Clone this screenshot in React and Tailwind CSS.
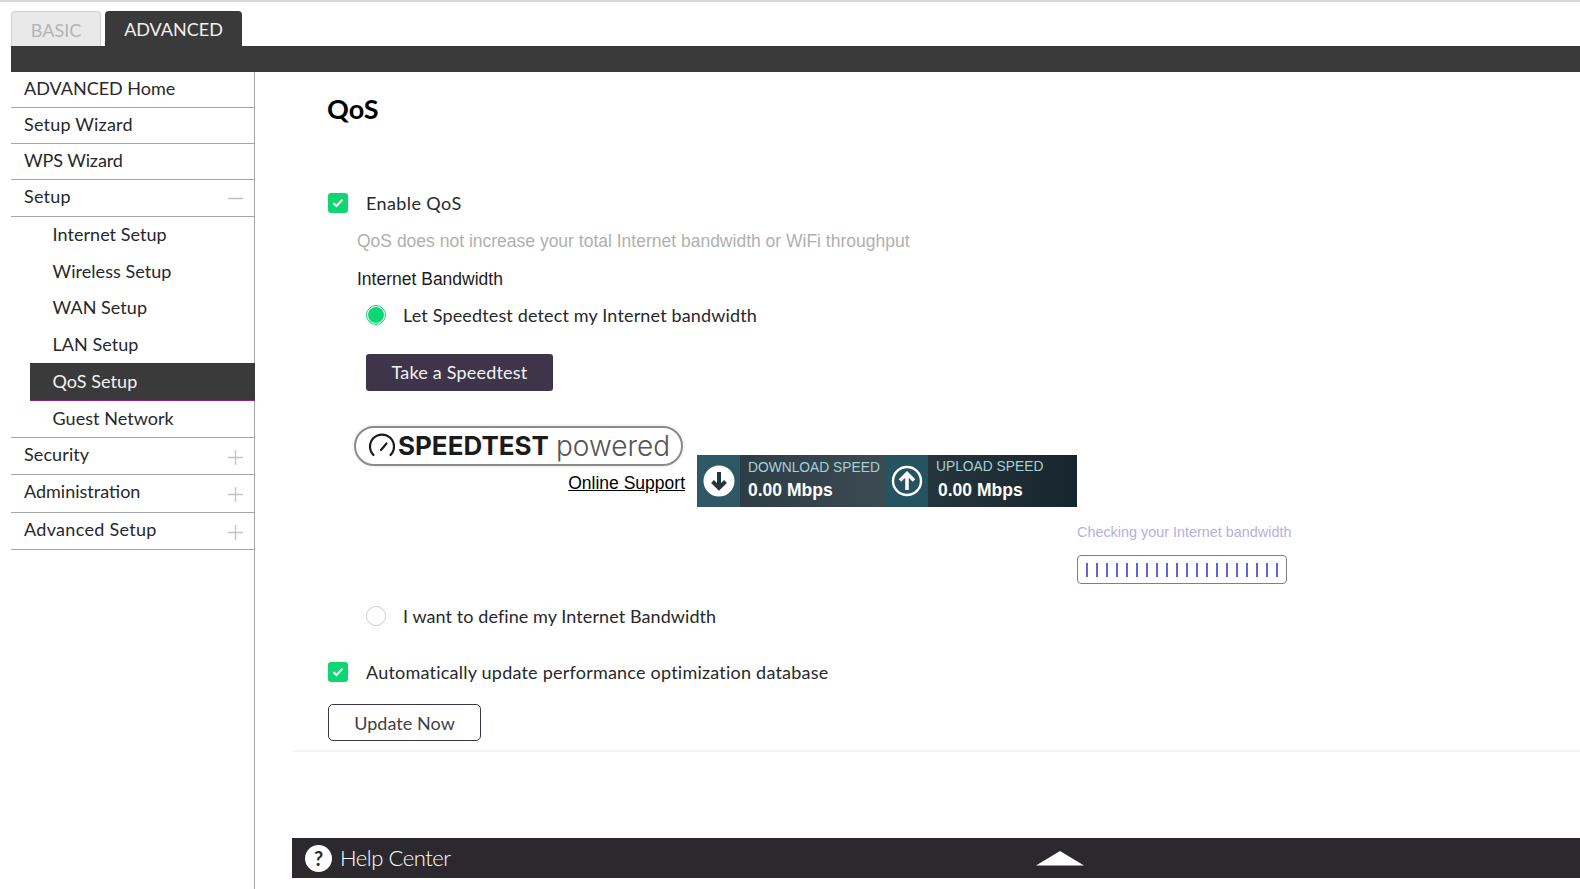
import React from "react";

const lato = "font-['Lato','Noto_Sans',sans-serif]";
const arial = "font-['Liberation_Sans',Arial,sans-serif]";

function Top({ label, h = "h-[36px]", icon, lift = "-mt-[2px]", tracking = "" }) {
  return (
    <div className={`${h} flex items-center justify-between border-b border-[#a6a6a6] pl-[13px] pr-[11px] text-[18px] text-[#28282c]`}>
      <span className={`${lift} ${tracking}`}>{label}</span>
      {icon === "minus" && <svg width="15" height="15" viewBox="0 0 15 15" className="shrink-0"><path d="M0 7.5H15" stroke="#bdbdbd" strokeWidth="1.4" /></svg>}
      {icon === "plus" && <svg width="15" height="15" viewBox="0 0 15 15" className="mt-[3px] shrink-0"><path d="M0 7.5H15M7.5 0V15" stroke="#c4c4c4" strokeWidth="1.4" /></svg>}
    </div>
  );
}

function Sub({ label, active, h = "h-[36.6px]" }) {
  return (
    <div className={`${h} flex items-center pb-[1.5px] pl-[22.5px] text-[18px] tracking-[0.05px] ml-[19px] ${active ? "-mr-[1px] bg-[#3a3a3a] text-[#f2f2f2] border-b border-[#8e1f8f]" : "text-[#28282c]"}`}>
      {label}
    </div>
  );
}

function Check() {
  return (
    <span className="flex h-[20px] w-[20px] shrink-0 items-center justify-center rounded-[3px] bg-[#0fd673]">
      <svg width="12" height="10" viewBox="0 0 12 10"><path d="M1.5 5.2L4.5 8L10.5 1.6" fill="none" stroke="#fff" strokeWidth="2" /></svg>
    </span>
  );
}

function ArrowCircle({ filled }) {
  return (
    <svg width="32" height="32" viewBox="0 0 32 32">
      {filled ? (
        <>
          <circle cx="16" cy="16" r="15.5" fill="#fff" />
          <path d="M16 7V23M9.5 16.5L16 23L22.5 16.5" fill="none" stroke="#26343c" strokeWidth="4" />
        </>
      ) : (
        <>
          <circle cx="16" cy="16" r="14" fill="none" stroke="#fff" strokeWidth="2.4" />
          <path d="M16 25V8.5M9 15.5L16 8.5L23 15.5" fill="none" stroke="#fff" strokeWidth="3.6" />
        </>
      )}
    </svg>
  );
}

export default function App() {
  const ticks = Array.from({ length: 20 }, (_, i) => i);
  return (
    <div className={`${lato} flex h-[889px] w-[1580px] flex-col overflow-hidden bg-white`}>
      <div className="h-[2px] shrink-0 bg-[#d9d9d9]" />
      <div className="ml-[11px] mt-[9px] flex h-[35px] shrink-0 items-end gap-[4px] text-[18px]">
        <div className="flex h-[35px] w-[90px] items-center justify-center rounded-t-[4px] border border-b-0 border-[#d2d2d2] bg-[#e9e9e9] pt-[2px] text-[#b4b4b4]">BASIC</div>
        <div className="flex h-[35px] w-[137px] items-center justify-center rounded-t-[4px] bg-[#3a3a3a] pt-[2px] text-[#f0f0f0]">ADVANCED</div>
      </div>
      <div className="ml-[11px] h-[26px] shrink-0 bg-[#3a3a3a]" />
      <div className="flex min-h-0 flex-1">
        <aside className="ml-[11px] w-[244px] shrink-0 border-r border-[#a6a6a6]">
          <Top label="ADVANCED Home" />
          <Top label="Setup Wizard" tracking="tracking-[0.2px]" />
          <Top label="WPS Wizard" tracking="-tracking-[0.1px]" />
          <Top label="Setup" h="h-[37px]" icon="minus" lift="-mt-[4px]" tracking="tracking-[0.2px]" />
          <Sub label="Internet Setup" />
          <Sub label="Wireless Setup" />
          <Sub label="WAN Setup" />
          <Sub label="LAN Setup" />
          <Sub label="QoS Setup" active h="h-[38px]" />
          <div className="border-b border-[#a6a6a6]"><Sub label="Guest Network" h="h-[35.6px]" /></div>
          <Top label="Security" h="h-[37px]" icon="plus" tracking="tracking-[0.1px]" />
          <Top label="Administration" h="h-[38px]" icon="plus" lift="-mt-[4px]" />
          <Top label="Advanced Setup" h="h-[37px]" icon="plus" tracking="tracking-[0.3px]" />
        </aside>
        <main className="flex min-w-0 flex-1 flex-col">
          <div className="flex-1 pl-[73px] text-[18px] text-[#28282c]">
            <h1 className="-ml-[1px] mt-[21px] h-[33px] text-[27px] leading-[32px] font-bold text-black">QoS</h1>
            <div className="mt-[67px] flex h-[20px] items-center gap-[18px]">
              <Check />
              <span className="tracking-[0.4px]">Enable QoS</span>
            </div>
            <div className={`${arial} ml-[29px] mt-[16px] h-[24px] text-[17.5px] leading-[24px] text-[#b0b0b0]`}>QoS does not increase your total Internet bandwidth or WiFi throughput</div>
            <div className={`${arial} ml-[29px] mt-[14px] h-[24px] text-[17.5px] leading-[24px] text-[#1c1c1c]`}>Internet Bandwidth</div>
            <div className="ml-[38px] mt-[14px] flex h-[20px] items-center gap-[17px]">
              <span className="flex h-[20px] w-[20px] items-center justify-center rounded-full border border-[#0fd673]">
                <span className="h-[16px] w-[16px] rounded-full bg-[#0fd673]" />
              </span>
              <span className="tracking-[0.15px]">Let Speedtest detect my Internet bandwidth</span>
            </div>
            <button className="ml-[38px] mt-[29px] block h-[37px] w-[187px] rounded-[3px] bg-[#3f354a] text-[18px] tracking-[0.2px] text-[#f2f2f2]">Take a Speedtest</button>

            <div className="ml-[26px] mt-[35px] flex items-start">
              <div className="w-[331px] shrink-0">
                <div className="flex h-[40px] w-[329px] items-center rounded-full border-2 border-[#8a8a8a] pl-[12px] text-[#1b1b1b] shadow-[0_0_0_2px_#f6f6f6]">
                  <svg width="28" height="28" viewBox="0 0 28 28" className="shrink-0">
                    <path d="M5.5 23A12 12 0 1 1 22.5 23" fill="none" stroke="#1b1b1b" strokeWidth="2.2" strokeLinecap="round" />
                    <path d="M13 18L18.5 11.5" fill="none" stroke="#1b1b1b" strokeWidth="2.2" strokeLinecap="round" />
                  </svg>
                  <span className="ml-[2px] font-['Inter',sans-serif] text-[26px] font-bold leading-none">SPEEDTEST</span>
                  <span className="ml-[7px] font-['Inter',sans-serif] text-[28px] font-light leading-none text-[#555]">powered</span>
                </div>
                <div className={`${arial} mt-[5px] text-right text-[17.5px] leading-[24px] text-black underline`}>Online Support</div>
              </div>
              <div className={`${arial} ml-[12px] mt-[29px] flex h-[52px] w-[380px] shrink-0 bg-[#2a3a43] text-white`}>
                <div className="flex w-[43px] shrink-0 items-center justify-center bg-[#2f5866]"><ArrowCircle filled /></div>
                <div className="w-[146px] shrink-0 bg-linear-to-r from-[#2d3d46] to-[#3c4a52] pl-[8px]">
                  <div className="mt-[2px] h-[19px] origin-left scale-x-[0.92] whitespace-nowrap text-[15px] leading-[19px] font-medium text-[#a6d0d8]">DOWNLOAD SPEED</div>
                  <div className="mt-[2px] text-[17.5px] leading-[24px] font-bold">0.00 Mbps</div>
                </div>
                <div className="flex w-[42px] shrink-0 items-center justify-center bg-[#25535f]"><ArrowCircle /></div>
                <div className="flex-1 bg-linear-to-r from-[#26343c] to-[#17262e] pl-[8px]">
                  <div className="mt-[1px] h-[19px] origin-left scale-x-[0.92] whitespace-nowrap text-[15px] leading-[19px] font-medium text-[#a6d0d8]">UPLOAD SPEED</div>
                  <div className="ml-[2px] mt-[3px] text-[17.5px] leading-[24px] font-bold">0.00 Mbps</div>
                </div>
              </div>
            </div>

            <div className="ml-[749px] mt-[16px] w-[220px]">
              <div className={`${arial} h-[18px] whitespace-nowrap text-[14.4px] leading-[18px] text-[#b5b0dc]`}>Checking your Internet bandwidth</div>
              <div className="mt-[14px] flex h-[29px] w-[210px] items-center justify-between rounded-[4px] border border-[#7f7f7f] px-[8px]">
                {ticks.map((i) => <span key={i} className="h-[14px] w-[2px] bg-[#6363e0]" />)}
              </div>
            </div>

            <div className="ml-[38px] mt-[22px] flex h-[20px] items-center gap-[17px]">
              <span className="h-[20px] w-[20px] rounded-full border border-[#cfcfcf] bg-white" />
              <span className="tracking-[0.08px]">I want to define my Internet Bandwidth</span>
            </div>
            <div className="mt-[36px] flex h-[20px] items-center gap-[18px]">
              <Check />
              <span className="tracking-[0.22px]">Automatically update performance optimization database</span>
            </div>
            <button className="mt-[22px] block h-[37px] w-[153px] rounded-[5px] border border-[#3f354a] pt-[1px] text-[18px] tracking-[0.05px] text-[#3f3f46]">Update Now</button>
            <div className="-ml-[36px] mt-[9px] h-[2px] bg-[#f4f4f4]" />
          </div>
          <div className="mb-[11px] ml-[37px] flex h-[40px] shrink-0 items-center bg-[#2c292e] pl-[13px] text-white">
            <span className="flex h-[27px] w-[27px] items-center justify-center rounded-full bg-white text-[20px] leading-none font-bold text-[#2c292e]">?</span>
            <span className="-mt-[2px] ml-[8px] text-[22px] font-light tracking-[-0.45px]">Help Center</span>
            <svg width="48" height="15" viewBox="0 0 48 15" className="ml-[585px]"><path d="M24 0L48 14.5H0Z" fill="#fff" /></svg>
          </div>
        </main>
      </div>
    </div>
  );
}
